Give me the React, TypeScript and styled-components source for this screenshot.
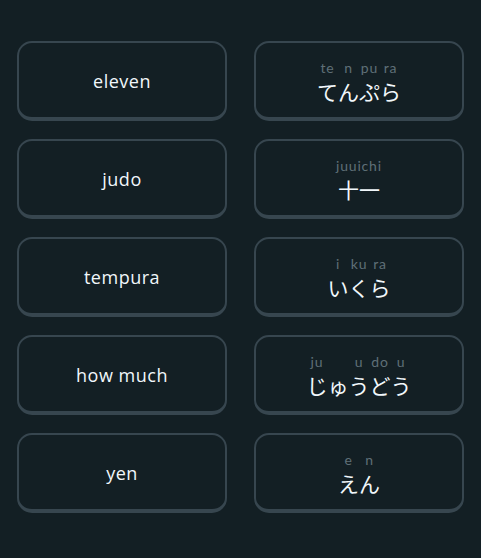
import React from "react";
import styled, { createGlobalStyle } from "styled-components";

const Global = createGlobalStyle`
  html, body { margin: 0; padding: 0; background: #131f24; }
  body { font-family: "Open Sans", "Noto Sans", sans-serif; }
`;

const Board = styled.div`
  display: grid;
  grid-template-columns: 210px 210px;
  column-gap: 27px;
  row-gap: 18px;
  padding: 41px 17px 45px;
  min-height: 558px;
  box-sizing: border-box;
  background: #131f24;
`;

const Card = styled.div`
  box-sizing: border-box;
  height: 80px;
  border: 2px solid #37464f;
  border-bottom-width: 4px;
  border-radius: 15px;
  display: flex;
  flex-direction: column;
  align-items: center;
  justify-content: center;
  color: #f1f7fb;
`;

const Word = styled.span`
  display: block;
  font-family: "Open Sans", "Noto Sans", sans-serif;
  font-size: 18px;
  font-weight: 500;
  letter-spacing: 0.5px;
  line-height: 22px;
  margin-top: 2px;
`;

const Ruby = styled.div`
  display: flex;
  align-items: flex-end;
  margin-top: 2px;
`;

const Cell = styled.div`
  display: flex;
  flex-direction: column;
  align-items: center;
  gap: 3px;
`;

const Romaji = styled.span`
  display: block;
  font-family: "Lato", "Open Sans", sans-serif;
  font-size: 14px;
  line-height: 17px;
  height: 17px;
  color: #5f6f77;
  letter-spacing: 0.8px;
  white-space: nowrap;
`;

const Kana = styled.span`
  display: block;
  font-family: "Noto Sans CJK JP", sans-serif;
  font-size: 21px;
  line-height: 25px;
  font-weight: 400;
  color: #f1f7fb;
`;

type Pair = [string, string];

const rows: { en: string; jp: Pair[] }[] = [
  { en: "eleven", jp: [["te", "て"], ["n", "ん"], ["pu", "ぷ"], ["ra", "ら"]] },
  { en: "judo", jp: [["juuichi", "十一"]] },
  { en: "tempura", jp: [["i", "い"], ["ku", "く"], ["ra", "ら"]] },
  { en: "how much", jp: [["ju", "じ"], ["", "ゅ"], ["u", "う"], ["do", "ど"], ["u", "う"]] },
  { en: "yen", jp: [["e", "え"], ["n", "ん"]] },
];

export default function App() {
  return (
    <>
      <Global />
      <Board>
        {rows.map((r) => (
          <React.Fragment key={r.en}>
            <Card>
              <Word>{r.en}</Word>
            </Card>
            <Card>
              <Ruby>
                {r.jp.map(([ro, ka], i) => (
                  <Cell key={i}>
                    <Romaji>{ro}</Romaji>
                    <Kana>{ka}</Kana>
                  </Cell>
                ))}
              </Ruby>
            </Card>
          </React.Fragment>
        ))}
      </Board>
    </>
  );
}
